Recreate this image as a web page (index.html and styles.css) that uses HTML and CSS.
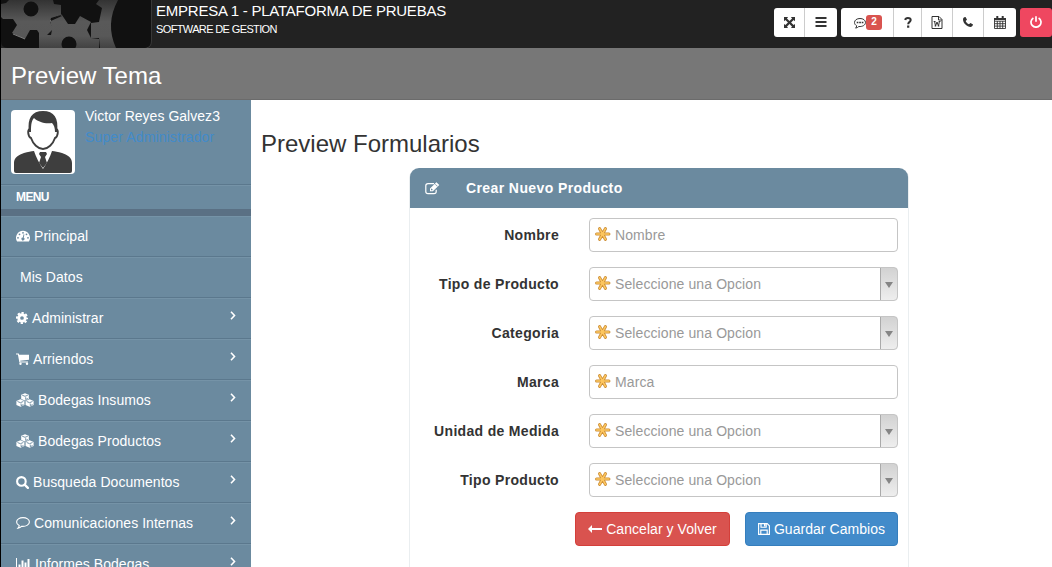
FILE: index.html
```html
<!DOCTYPE html>
<html lang="es">
<head>
<meta charset="utf-8">
<title>Preview Tema</title>
<link rel="stylesheet" href="styles.css">
</head>
<body>
<svg class="sprite" aria-hidden="true">
  <symbol id="expand" viewBox="0 0 12 12"><path d="M0 0h4.5L3.2 1.5 6 4.3 8.8 1.5 7.500 0H12v4.5L10.5 3.2 7.7 6l2.8 2.8L12 7.5V12H7.5l1.3-1.5L6 7.7 3.2 10.5 4.5 12H0V7.5l1.5 1.3L4.3 6 1.5 3.2 0 4.5z"/></symbol>
  <symbol id="bars" viewBox="0 0 12 10"><path d="M.5 0h11v2H.5zM.5 4h11v2H.5zM.5 8h11v2H.5z"/></symbol>
  <symbol id="talk" viewBox="0 0 12 11"><path d="M6 .5C2.8.5.5 2.2.5 4.5c0 1.400.8 2.500 2.200 3.300-.1.900-.5 1.700-1.100 2.300 1.400-.2 2.500-.8 3.200-1.600 3.700.4 6.700-1.500 6.700-4C11.500 2.200 9.200.5 6 .5z" fill="none" stroke="currentColor"/><path d="M2.700 3.800h1.700v1.500H2.700zM5.200 3.800h1.700v1.500H5.200zM7.700 3.800h1.700v1.500H7.700z"/></symbol>
  <symbol id="question" viewBox="0 0 8 11"><path d="M1.200 3C1.400 1.700 2.400 1 3.900 1c1.700 0 2.800.8 2.800 2.100C6.700 4.900 4.200 4.900 4.200 7.300" fill="none" stroke="currentColor" stroke-width="2"/><path d="M3.100 8.500h2.200v2.200H3.100z"/></symbol>
  <symbol id="word" viewBox="0 0 12 13"><path d="M1 .5h7L11 3.500v9H1zM7.500.5V4H11M2.700 5.500h1.800M7.700 5.500h1.800M3.600 5.500l.9 4.500L6 6l1.500 4 .9-4.500M3.700 10h1.500M6.800 10h1.500" fill="none" stroke="currentColor"/></symbol>
  <symbol id="phone" viewBox="0 0 11 11"><path d="M2.400.1C1 .5 0 1.400 0 2.700 0 6.500 4.500 11 8.300 11c1.300 0 2.200-1 2.600-2.400l-.1-.6-2.700-1.400-1.500 1.500C5 7.400 3.600 6 2.900 4.400l1.500-1.500L3 .2z"/></symbol>
  <symbol id="calendar" viewBox="0 0 12 13"><path d="M.5 2.500h11v10H.5zM.5 5.200h11M.5 7.700h11M.5 10.100h11M3.300 5v7.500M6 5v7.500M8.700 5v7.500" fill="none" stroke="currentColor" stroke-width=".9"/><path d="M2.300 0h2v4h-2zM7.700 0h2v4h-2zM0 2h12v2H0z"/></symbol>
  <symbol id="power" viewBox="0 0 12 12"><path d="M3.400 1.900a5 5 0 1 0 5.200 0M6 .3v5.400" fill="none" stroke="currentColor" stroke-width="1.700"/></symbol>
  <symbol id="gauge" viewBox="0 0 14 12"><path fill-rule="evenodd" d="M7 .8a7 7 0 0 0-5.900 10.700h11.800A7 7 0 0 0 7 .8zM7 1.900a.9.9 0 1 1 0 1.800.9.9 0 0 1 0-1.800zM3.500 3.400a.9.900 0 1 1 0 1.800.9.9 0 0 1 0-1.800zM2 6.900a.9.900 0 1 1 0 1.800.9.9 0 0 1 0-1.800zM10.500 3.400a.9.900 0 1 1 0 1.800.9.9 0 0 1 0-1.800zM12 6.900a.9.900 0 1 1 0 1.800.9.9 0 0 1 0-1.800zM7.600 4.300l.8.200-.7 3.200a1.500 1.500 0 1 1-.9-.2z"/></symbol>
  <symbol id="gear" viewBox="0 0 12 12"><circle cx="6" cy="6" r="3.300" fill="none" stroke="currentColor" stroke-width="2.900"/><circle cx="6" cy="6" r="5.100" fill="none" stroke="currentColor" stroke-width="1.900" stroke-dasharray="2.300 1.705" stroke-dashoffset="1.150"/></symbol>
  <symbol id="cart" viewBox="0 0 13 12"><path d="M0 .5h2.700l.5 1.300H13v4.900l-8.800 1 .2.800H12v1H3.400L1.900 1.600H0z"/><circle cx="4.500" cy="10.700" r="1.200"/><circle cx="11" cy="10.700" r="1.200"/></symbol>
  <symbol id="cubes" viewBox="0 0 18 14"><path d="M9 .2l3.800 1.500v4.200L9 7.600 5.200 5.900V1.700zM4.400 6.200L8.400 8v4L4.400 13.800.4 12V8zM13.600 6.200l4 1.800v4l-4 1.800-4-1.800V8z"/><path class="cube-edge" d="M6.200 2.200L9 3.300l2.800-1.100M9.700 4.200v2.300l2.200-1M1.500 8.500l2.900 1.200 2.900-1.200M5.100 10.600v2.100L7.400 11.600M10.700 8.500l2.900 1.200 2.900-1.200M14.300 10.600v2.100l2.300-1.100"/></symbol>
  <symbol id="search" viewBox="0 0 13 13"><circle cx="5.400" cy="5.400" r="4.300" fill="none" stroke="currentColor" stroke-width="2.100"/><path d="M8.600 8.600l3.300 3.300" stroke="currentColor" stroke-width="2.300" stroke-linecap="round"/></symbol>
  <symbol id="comment" viewBox="0 0 14 12"><path d="M7 .6C3.400.6.600 2.500.6 5c0 1.500 1 2.800 2.600 3.600-.1 1-.6 1.900-1.200 2.600 1.500-.3 2.700-1 3.500-1.900C9.900 9.800 13.400 7.800 13.400 5 13.400 2.500 10.600.6 7 .6z" fill="none" stroke="currentColor" stroke-width="1.100"/></symbol>
  <symbol id="chart" viewBox="0 0 15 12"><path d="M0 0h1v11h14v1H0zM2.500 6.500h2V10h-2zM5.500 2.500h2V10h-2zM8.500 4.500h2V10h-2zM11.500 1h2v9h-2z"/></symbol>
  <symbol id="edit" viewBox="0 0 15 13"><path d="M9 1.600H3A2.200 2.200 0 0 0 .8 3.800v5.700A2.200 2.200 0 0 0 3 11.700h6a2.200 2.200 0 0 0 2.200-2.200V7.700" fill="none" stroke="currentColor" stroke-width="1.200"/><path fill-rule="evenodd" d="M5 6.500L11.400.2l2.900 2.700L7.900 9.200H5zm1 .5v1.200h1.300l.5-.5-1.200-1.300zM10 2.300l2.100 2.100.5-.4-2.200-2.100z"/></symbol>
  <symbol id="arrow" viewBox="0 0 14 8"><path d="M0 4L4 0v3h10v2H4v3z"/></symbol>
  <symbol id="save" viewBox="0 0 12 12"><path d="M.6.6h8.600l2.200 2.200v8.600H.6zM3 .6v3.600h5.200V.6M2.800 11.400V7.100h6.400v4.300" fill="none" stroke="currentColor" stroke-width="1.150"/><path d="M6 1h1.500v2.600H6z"/></symbol>
  <symbol id="chevron" viewBox="0 0 6 9"><path d="M1 .8l3.500 3.700L1 8.200" fill="none" stroke="currentColor" stroke-width="1.600"/></symbol>
  <symbol id="required" viewBox="0 0 16 16"><path d="M4.600 2.700L10.400 13.300M10.400 2.700L4.600 13.300M1.600 8h12.300" stroke="#cb8c35" stroke-width="3.100" stroke-linecap="round"/><path d="M4.600 2.700L10.400 13.300M10.400 2.700L4.600 13.300M1.600 8h12.300" stroke="#fcc65f" stroke-width="1.600" stroke-linecap="round"/></symbol>
</svg>

<div class="page">
  <header class="topbar">
    <svg class="logo" viewBox="0 0 151 48">
      <defs>
        <linearGradient id="metal" gradientUnits="userSpaceOnUse" x1="0" y1="0" x2="0" y2="48"><stop offset="0" stop-color="#333"/><stop offset=".45" stop-color="#595959"/><stop offset=".75" stop-color="#585858"/><stop offset="1" stop-color="#424242"/></linearGradient>
        <clipPath id="plate"><path d="M0 0h150v41q0 7-7 7H7q-7 0-7-7z"/></clipPath>
      </defs>
      <g clip-path="url(#plate)">
        <path fill="#111" d="M0 0h150v48H0z"/>
        <path fill="url(#metal)" fill-rule="evenodd" d="M0 4L5 3 8 0H52L53 4 60 5V15L50 18 49 22 52 28 47 35 40 36 36 30H29L24 39 11 33 16 25 12 19H2L0 17zM30 1.500a7.500 7.500 0 1 0 0 15 7.500 7.500 0 0 0 0-15z"/>
        <path fill="url(#metal)" fill-rule="evenodd" d="M38 33L47 33 51 28 49 21 61 15 67 24H74L79 16 90 22 86 30 90 38 98 39V48H38zM68 36.500a7.500 7.500 0 1 0 0 15 7.500 7.500 0 0 0 0-15z"/>
        <path fill="url(#metal)" d="M98 0H117Q104 24 115 48H99L98 38H90V23L98 22 101 8 95 4z"/>
        <path d="M49 21l12-6M12 34l12 5" fill="none" stroke="#888" stroke-width=".9"/>
        <path d="M50 19l10-4 1 1-11 5zM46 35l5-5-1 5z" fill="#141414"/>
      </g>
      <path d="M150.500 0v41q0 6-5 7" fill="none" stroke="#383838"/>
    </svg>
    <div class="brand">
      <div class="company">EMPRESA 1 - PLATAFORMA DE PRUEBAS</div>
      <div class="tagline">SOFTWARE DE GESTION</div>
    </div>
    <nav class="tools">
      <div class="group">
        <a class="tool"><svg width="11" height="11"><use href="#expand"/></svg></a>
        <a class="tool"><svg width="12" height="10"><use href="#bars"/></svg></a>
      </div>
      <div class="group">
        <a class="tool messages"><svg width="12" height="11"><use href="#talk"/></svg><span class="badge">2</span></a>
        <a class="tool help"><svg width="8" height="11"><use href="#question"/></svg></a>
        <a class="tool"><svg width="12" height="13"><use href="#word"/></svg></a>
        <a class="tool"><svg width="10" height="10"><use href="#phone"/></svg></a>
        <a class="tool"><svg width="12" height="13"><use href="#calendar"/></svg></a>
      </div>
      <div class="group exit">
        <a class="tool"><svg width="12" height="12"><use href="#power"/></svg></a>
      </div>
    </nav>
  </header>

  <div class="titlebar">Preview Tema</div>

  <div class="columns">
    <aside class="sidebar">
      <div class="profile">
        <svg class="avatar" viewBox="0 0 64 64">
          <rect width="64" height="64" rx="4" fill="#fff"/>
          <path d="M3 61v-8c0-6 5-8 10-10 4-1 7-2 10-2 2 6 5 12 9 18 4-6 7-12 9-18 3 0 6 1 10 2 5 2 10 4 10 10v8q0 2-2 2H5q-2 0-2-2z" fill="#3e3e3e"/>
          <path d="M29 42h6l1 2-2 3 2 6-4 5-4-5 2-6-2-3z" fill="#3e3e3e"/>
          <path d="M19 19c-3 0-2 8 1 9 2 6 7 11 12 11s10-5 12-11c3-1 4-9 1-9" fill="#fff" stroke="#3e3e3e" stroke-width="1.900"/>
          <path d="M18 22C16 8 21 1 32 1s16 7 14 21h-2c0-4-1-7-3-9-7 1-14-1-18-5-3 3-3 9-3 14z" fill="#3e3e3e"/>
        </svg>
        <div class="person"><div>Victor Reyes Galvez3</div><div class="role">Super Administrador</div></div>
      </div>
      <div class="menu-title">MENU</div>
      <ul class="menu">
        <li><svg width="14" height="12"><use href="#gauge"/></svg><span>Principal</span></li>
        <li><span class="plain">Mis Datos</span></li>
        <li><svg width="12" height="12"><use href="#gear"/></svg><span>Administrar</span><svg class="chevron" width="6" height="9"><use href="#chevron"/></svg></li>
        <li><svg width="13" height="12"><use href="#cart"/></svg><span>Arriendos</span><svg class="chevron" width="6" height="9"><use href="#chevron"/></svg></li>
        <li><svg width="18" height="14"><use href="#cubes"/></svg><span>Bodegas Insumos</span><svg class="chevron" width="6" height="9"><use href="#chevron"/></svg></li>
        <li><svg width="18" height="14"><use href="#cubes"/></svg><span>Bodegas Productos</span><svg class="chevron" width="6" height="9"><use href="#chevron"/></svg></li>
        <li><svg width="13" height="13"><use href="#search"/></svg><span>Busqueda Documentos</span><svg class="chevron" width="6" height="9"><use href="#chevron"/></svg></li>
        <li><svg width="14" height="12"><use href="#comment"/></svg><span>Comunicaciones Internas</span><svg class="chevron" width="6" height="9"><use href="#chevron"/></svg></li>
        <li><svg width="15" height="12"><use href="#chart"/></svg><span>Informes Bodegas</span><svg class="chevron" width="6" height="9"><use href="#chevron"/></svg></li>
      </ul>
    </aside>

    <main class="content">
      <h1>Preview Formularios</h1>
      <section class="panel">
        <div class="panel-head"><svg width="15" height="13"><use href="#edit"/></svg><span>Crear Nuevo Producto</span></div>
        <div class="form">
          <div class="row"><label>Nombre</label><div class="field"><svg width="16" height="16"><use href="#required"/></svg><span>Nombre</span></div></div>
          <div class="row"><label>Tipo de Producto</label><div class="field"><svg width="16" height="16"><use href="#required"/></svg><span>Seleccione una Opcion</span><i class="drop"></i></div></div>
          <div class="row"><label>Categoria</label><div class="field"><svg width="16" height="16"><use href="#required"/></svg><span>Seleccione una Opcion</span><i class="drop"></i></div></div>
          <div class="row"><label>Marca</label><div class="field"><svg width="16" height="16"><use href="#required"/></svg><span>Marca</span></div></div>
          <div class="row"><label>Unidad de Medida</label><div class="field"><svg width="16" height="16"><use href="#required"/></svg><span>Seleccione una Opcion</span><i class="drop"></i></div></div>
          <div class="row"><label>Tipo Producto</label><div class="field"><svg width="16" height="16"><use href="#required"/></svg><span>Seleccione una Opcion</span><i class="drop"></i></div></div>
          <div class="actions">
            <button class="cancel"><svg width="14" height="8"><use href="#arrow"/></svg>Cancelar y Volver</button>
            <button class="save"><svg width="12" height="12"><use href="#save"/></svg>Guardar Cambios</button>
          </div>
        </div>
      </section>
    </main>
  </div>
</div>
</body>
</html>
```

FILE: styles.css
```css
* { box-sizing: border-box; }
body {
  margin: 0;
  background: #fff;
  color: #333;
  font: 14px/20px "Liberation Sans", Arial, sans-serif;
}
svg { flex: none; fill: currentColor; }
.sprite { display: none; }
.page {
  height: 567px;
  overflow: hidden;
  border-left: 1px solid #000;
  display: flex;
  flex-direction: column;
}

.topbar { flex: none; height: 48px; background: #222; color: #fff; display: flex; }
.logo { width: 151px; height: 48px; }
.brand { padding-left: 4px; white-space: nowrap; }
.company { font-size: 15px; line-height: 22px; letter-spacing: -.24px; }
.tagline { font-size: 11px; line-height: 14px; letter-spacing: -.63px; }
.tools { display: flex; gap: 4px; margin-left: auto; padding-top: 8px; }
.group { display: flex; height: 29px; background: #fff; border-radius: 3px; color: #333; overflow: hidden; }
.tool { width: 31px; display: flex; align-items: center; justify-content: center; padding-bottom: 1px; border-right: 1px solid #ccc; }
.group .tool:last-child { width: 32px; border-right: 0; }
.group .messages { width: 53px; padding-left: 2px; }
.messages svg { margin-top: 2px; }
.group .help { width: 28px; }
.badge { background: #d9534f; color: #fff; width: 16px; height: 15px; border-radius: 3px; font: bold 10px/14px "Liberation Sans", Arial, sans-serif; text-align: center; }
.group.exit { background: #ef4760; color: #fff; }

.titlebar {
  flex: none;
  height: 52px;
  padding-left: 10px;
  background: #777;
  border-bottom: 1px solid #6b6b6b;
  color: #fff;
  font-size: 24px;
  line-height: 55px;
}

.columns { flex: 1; min-height: 0; display: flex; }
.sidebar { width: 250px; flex: none; background: #6b8a9f; color: #fff; }
.profile { display: flex; gap: 10px; height: 84px; padding: 10px 10px 0; }
.avatar { width: 64px; height: 64px; }
.person { line-height: 21px; margin-top: -4px; letter-spacing: .03px; }
.role { color: #428bca; letter-spacing: .13px; }
.menu-title {
  height: 32px;
  padding-left: 15px;
  border-top: 1px solid #5b788d;
  border-bottom: 7px solid #5a7084;
  box-shadow: inset 0 1px #7593a7;
  font: bold 12px/24px "Liberation Sans", Arial, sans-serif;
  letter-spacing: -.6px;
}
.menu { list-style: none; margin: 0; padding: 0; letter-spacing: .05px; }
.menu li {
  height: 41px;
  display: flex;
  align-items: center;
  gap: 4px;
  padding: 0 15px;
  border-bottom: 1px solid #5b788d;
  box-shadow: inset 0 1px #7593a7;
}
.plain { padding-left: 4px; }
.chevron { margin: -5px 0 0 auto; }
.cube-edge { fill: none; stroke: #6b8a9f; stroke-width: .9; }

.content { flex: 1; padding: 30px 10px 0; }
h1 { margin: 0; font-size: 24px; line-height: 28px; font-weight: 400; }
.panel { width: 500px; height: 450px; margin: 10px 0 0 148px; border: 1px solid #eaeef0; border-top: 0; border-radius: 10px 10px 0 0; }
.panel-head {
  height: 40px;
  display: flex;
  align-items: center;
  gap: 26px;
  padding-left: 15px;
  background: #6b8a9f;
  border-radius: 9px 9px 0 0;
  color: #fff;
  font-weight: 700;
  letter-spacing: .4px;
}
.form { padding: 10px 10px 0; display: flex; flex-direction: column; gap: 15px; }
.row { display: grid; grid-template-columns: 139px 309px; gap: 30px; align-items: center; }
label { text-align: right; font-weight: 700; white-space: nowrap; letter-spacing: .32px; }
.field { height: 34px; display: flex; align-items: center; border: 1px solid #c5c5c5; border-radius: 4px; padding-left: 5px; gap: 4px; color: #999; overflow: hidden; letter-spacing: .1px; }
.field svg { margin-top: -2px; }
.drop {
  margin-left: auto;
  width: 18px;
  height: 34px;
  background: linear-gradient(#d2d2d2, #eee);
  border: 1px solid #aaa;
  border-radius: 0 4px 4px 0;
  margin-right: -1px;
  display: grid;
  place-items: center;
}
.drop::before { content: ""; margin-top: 1px; border: 4px solid transparent; border-top: 6px solid #858585; border-bottom: 0; }
.actions { display: flex; justify-content: flex-end; gap: 15px; }
button { height: 34px; display: flex; align-items: center; justify-content: center; gap: 4px; padding: 0; border: 1px solid; border-radius: 4px; color: #fff; font: 14px/20px "Liberation Sans", Arial, sans-serif; letter-spacing: .05px; }
.cancel { width: 155px; background: #d9534f; border-color: #d43f3a; }
.save { width: 153px; background: #428bca; border-color: #357ebd; }
```
